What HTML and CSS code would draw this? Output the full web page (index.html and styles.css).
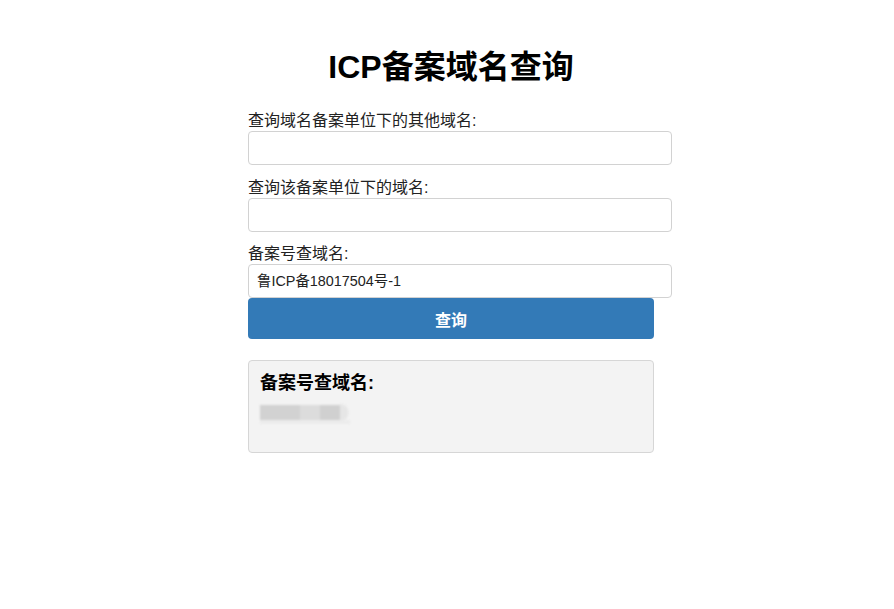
FILE: index.html
```html
<!DOCTYPE html>
<html lang="zh-CN">
<head>
    <meta charset="UTF-8">
    <meta name="viewport" content="width=device-width, initial-scale=1.0">
    <title>ICP备案域名查询</title>
    <link rel="stylesheet" href="styles.css">
</head>
<body>
  <div class="page">
    <div class="container">
      <h1 class="title">ICP备案域名查询</h1>

      <form class="search-form">
        <label class="field-label" for="domain">查询域名备案单位下的其他域名:</label>
        <input class="field-input" type="text" id="domain" name="domain">

        <label class="field-label" for="company">查询该备案单位下的域名:</label>
        <input class="field-input" type="text" id="company" name="company">

        <label class="field-label" for="icp">备案号查域名:</label>
        <input class="field-input field-last" type="text" id="icp" name="icp" value="鲁ICP备18017504号-1">

        <button class="btn-search" type="button">查询</button>
      </form>

      <div class="result">
        <h3 class="result-title">备案号查域名:</h3>
        <p class="result-text"><span class="masked"></span></p>
      </div>
    </div>
  </div>
</body>
</html>
```

FILE: styles.css
```css
body {
  margin: 0;
  background: #fff;
  color: #000;
  font-family: "Liberation Sans", Arial, "Noto Sans CJK SC", sans-serif;
}

.page {
  padding: 48px 0 0 8px;
}

.container {
  width: 406px;
  margin: 0 auto;
}

.title {
  margin: 0 0 25px;
  font-size: 32px;
  line-height: 38px;
  font-weight: bold;
  text-align: center;
}

.field-label {
  display: block;
  font-size: 16px;
  line-height: 20px;
  color: #222;
}

.field-input {
  display: block;
  width: 100%;
  height: 16px;
  padding: 8px;
  margin: 0 0 12.5px;
  border: 1px solid #d2d2d2;
  border-radius: 4px;
  font-family: inherit;
  font-size: 14.4px;
  line-height: 16px;
  color: #222;
  background: #fff;
  outline: none;
}

.field-last {
  margin-bottom: 0;
}

.btn-search {
  display: block;
  width: 100%;
  height: 41px;
  border: none;
  border-radius: 4px;
  background: #337ab7;
  color: #fff;
  font-family: inherit;
  font-size: 16px;
  font-weight: bold;
  cursor: pointer;
}

.result {
  margin-top: 21px;
  padding: 10px 11px;
  background: #f3f3f3;
  border: 1px solid #d6d6d6;
  border-radius: 4px;
}

.result-title {
  margin: 0 0 9px;
  font-size: 18px;
  line-height: 24px;
  font-weight: bold;
}

.result-text {
  margin: 0 0 18px;
  height: 20px;
}

.masked {
  display: inline-block;
  width: 92px;
  height: 20px;
  background:
    linear-gradient(#d2d2d2, #d2d2d2) 0 1px / 40px 15px no-repeat,
    linear-gradient(#dcdcdc, #dcdcdc) 40px 1px / 20px 15px no-repeat,
    linear-gradient(#d0d0d0, #d0d0d0) 60px 1px / 20px 15px no-repeat,
    linear-gradient(#ececec, #ececec) 0 16px / 90px 4px no-repeat,
    radial-gradient(circle at 0 50%, #e6e6e6 8px, transparent 9px) 80px 0 / 12px 17px no-repeat;
  filter: blur(0.9px);
}
```
